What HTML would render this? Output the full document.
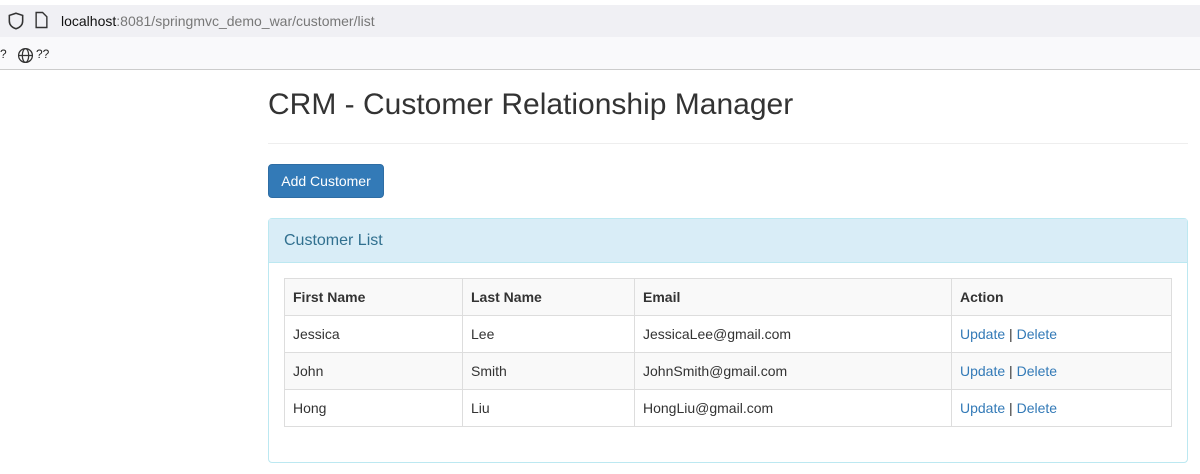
<!DOCTYPE html>
<html><head><style>
body{margin:0;width:1200px;height:474px;background:#fff;font-family:"Liberation Sans",sans-serif;position:relative;overflow:hidden}
.a{position:absolute}
.t{border-collapse:collapse;font-size:14px;color:#333}
.t td,.t th{border:1px solid #ddd;height:37px;padding:0 8px;text-align:left;box-sizing:border-box}
.t tr:nth-child(odd){background:#f9f9f9}
a{color:#337ab7;text-decoration:none}
</style></head><body>
<div class="a" style="left:0;top:0;width:1200px;height:5px;background:#fff"></div>
<div class="a" style="left:0;top:5px;width:1200px;height:32px;background:#f0f0f4"></div>
<svg class="a" style="left:6px;top:11px" width="20" height="20" viewBox="0 0 18 18"><path d="M9 2 L15 4 V9 C15 13 12 15 9 16 C6 15 3 13 3 9 V4 Z" fill="none" stroke="#333" stroke-width="1.4"/></svg>
<svg class="a" style="left:34px;top:11px" width="15" height="18" viewBox="0 0 14 16"><path d="M2 1 H8 L12 5 V15 H2 Z" fill="none" stroke="#333" stroke-width="1.3"/></svg>
<div class="a" style="left:61px;top:13px;font-size:14px;color:#777"><span style="color:#111">localhost</span>:8081/springmvc_demo_war/customer/list</div>
<div class="a" style="left:0;top:37px;width:1200px;height:32px;background:#f9f9fb;border-bottom:1px solid #ccc"></div>
<div class="a" style="left:0;top:47px;font-size:12px;color:#222">?</div>
<svg class="a" style="left:17px;top:47px" width="17" height="17" viewBox="0 0 16 16"><g fill="none" stroke="#333" stroke-width="1.2"><circle cx="8" cy="8" r="6.5"/><ellipse cx="8" cy="8" rx="3" ry="6.5"/><path d="M1.5 8H14.5"/></g></svg>
<div class="a" style="left:36px;top:47px;font-size:12px;color:#222">??</div>
<div class="a" style="left:268px;top:88px;font-size:30px;color:#333">CRM - Customer Relationship Manager</div>
<div class="a" style="left:268px;top:143px;width:920px;height:1px;background:#eee"></div>
<div class="a" style="left:268px;top:164px;width:116px;height:34px;background:#337ab7;border:1px solid #2e6da4;box-sizing:border-box;border-radius:4px;color:#fff;font-size:14px;line-height:32px;text-align:center">Add Customer</div>
<div class="a" style="left:268px;top:218px;width:920px;height:245px;border:1px solid #bce8f1;border-radius:4px;box-sizing:border-box">
<div style="height:44px;background:#d9edf7;border-bottom:1px solid #bce8f1;box-sizing:border-box;color:#31708f;font-size:16px;line-height:43px;padding-left:15px">Customer List</div>
</div>
<table class="t a" style="left:284px;top:278px;width:888px">
<tr><th style="width:178px">First Name</th><th style="width:172px">Last Name</th><th style="width:317px">Email</th><th>Action</th></tr>
<tr style="background:#fff"><td>Jessica</td><td>Lee</td><td>JessicaLee@gmail.com</td><td><a>Update</a> | <a>Delete</a></td></tr>
<tr><td>John</td><td>Smith</td><td>JohnSmith@gmail.com</td><td><a>Update</a> | <a>Delete</a></td></tr>
<tr style="background:#fff"><td>Hong</td><td>Liu</td><td>HongLiu@gmail.com</td><td><a>Update</a> | <a>Delete</a></td></tr>
</table>
</body></html>
